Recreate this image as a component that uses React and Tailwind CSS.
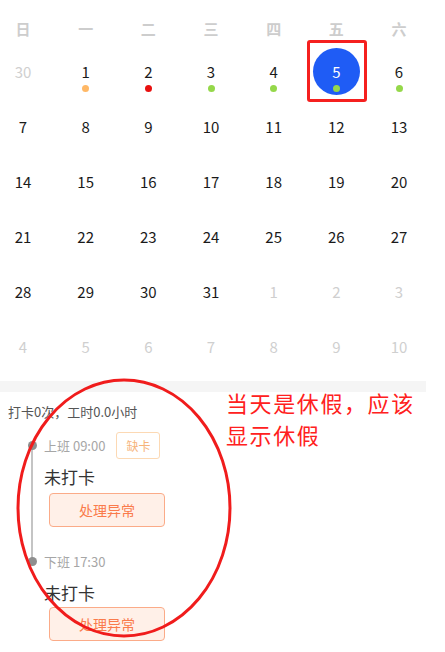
import React from 'react';

const WEEK = ['日', '一', '二', '三', '四', '五', '六'];

const DOT = {
  orange: 'bg-[#ffb866]',
  red: 'bg-[#e8100f]',
  green: 'bg-[#95d84a]',
};

const rows = [
  [
    { d: 30, muted: true },
    { d: 1, dot: 'orange' },
    { d: 2, dot: 'red' },
    { d: 3, dot: 'green' },
    { d: 4, dot: 'green' },
    { d: 5, dot: 'green', selected: true },
    { d: 6, dot: 'green' },
  ],
  [7, 8, 9, 10, 11, 12, 13].map((d) => ({ d })),
  [14, 15, 16, 17, 18, 19, 20].map((d) => ({ d })),
  [21, 22, 23, 24, 25, 26, 27].map((d) => ({ d })),
  [
    { d: 28 },
    { d: 29 },
    { d: 30 },
    { d: 31 },
    { d: 1, muted: true },
    { d: 2, muted: true },
    { d: 3, muted: true },
  ],
  [4, 5, 6, 7, 8, 9, 10].map((d) => ({ d, muted: true })),
];

const DayCell = ({ day }) => (
  <div className="relative h-[55px] flex items-center justify-center">
    {day.selected && (
      <div className="absolute left-[-6px] right-[-8px] top-[-4px] bottom-[-3px] border-[3px] border-[#f5201f] rounded-[3px]" />
    )}
    <div
      className={`w-[47px] h-[47px] shrink-0 rounded-full flex flex-col items-center pt-[16px] ${
        day.selected ? 'bg-[#1f5cf5]' : ''
      }`}
    >
      <span
        className={`h-[15px] text-[15px] leading-[15px] ${
          day.selected ? 'text-white' : day.muted ? 'text-[#cfcfcf]' : 'text-[#1a1a1a]'
        }`}
      >
        {day.d}
      </span>
      {day.dot && <span className={`mt-[6px] w-[7px] h-[7px] rounded-full ${DOT[day.dot]}`} />}
    </div>
  </div>
);

const FixButton = () => (
  <button className="w-[116px] h-[34px] ml-[5px] rounded-[4px] border border-[#fbab88] bg-[#fff0e8] text-[14px] text-[#fa7b4c]">
    处理异常
  </button>
);

const Punch = ({ label, badge, gap }) => (
  <div className={gap}>
    <div className="relative h-[27px] flex items-center">
      <span className="absolute left-[-16px] w-[9px] h-[9px] rounded-full bg-[#8e8e8e]" />
      <span className="text-[13px] text-[#a6a6a6]">{label}</span>
      {badge && (
        <span className="ml-[11px] h-[27px] px-[9px] flex items-center rounded-[3px] border border-[#fcd9b4] text-[12px] text-[#f6b47a]">
          {badge}
        </span>
      )}
    </div>
    <div className="mt-[6px] h-[24px] flex items-center text-[17px] text-[#333]">未打卡</div>
  </div>
);

export default function App() {
  return (
    <div
      className="relative w-[445px] h-[652px] bg-white overflow-hidden"
      style={{ fontFamily: '"Noto Sans CJK SC", "Noto Sans", sans-serif' }}
    >
      {/* calendar */}
      <div className="w-[422px] pt-[14px] grid grid-cols-7 gap-x-[16.67px]">
        {WEEK.map((w) => (
          <div key={w} className="h-[30px] flex items-center justify-center text-[15px] font-bold text-[#cdcdcd]">
            {w}
          </div>
        ))}
        {rows.flat().map((day, i) => (
          <DayCell key={i} day={day} />
        ))}
      </div>

      <div className="mt-[7px] w-[426px] h-[11px] bg-[#f5f5f5]" />

      {/* attendance detail */}
      <div className="pl-[8px] mt-[10px] text-[13px] leading-[20px] text-[#555]">打卡0次，工时0.0小时</div>

      <div className="relative pl-[44px] mt-[10px]">
        <div className="absolute left-[31px] top-[13px] h-[117px] w-[2px] bg-[#c4c4c4]" />
        <Punch label="上班 09:00" badge="缺卡" />
        <div className="mt-[4px]">
          <FixButton />
        </div>
        <Punch label="下班 17:30" gap="mt-[21px]" />
        <div className="mt-[2px]">
          <FixButton />
        </div>
      </div>

      {/* annotation */}
      <svg className="absolute left-0 top-0 pointer-events-none" width="445" height="652">
        <ellipse cx="124" cy="508" rx="106" ry="128" fill="none" stroke="#f01c1c" strokeWidth="3" />
      </svg>
      <div className="absolute left-[226px] top-[386px] flex flex-col text-[22px] tracking-[1.6px] leading-[32px] text-[#ff2020]">
        <span>当天是休假，应该</span>
        <span>显示休假</span>
      </div>
    </div>
  );
}
